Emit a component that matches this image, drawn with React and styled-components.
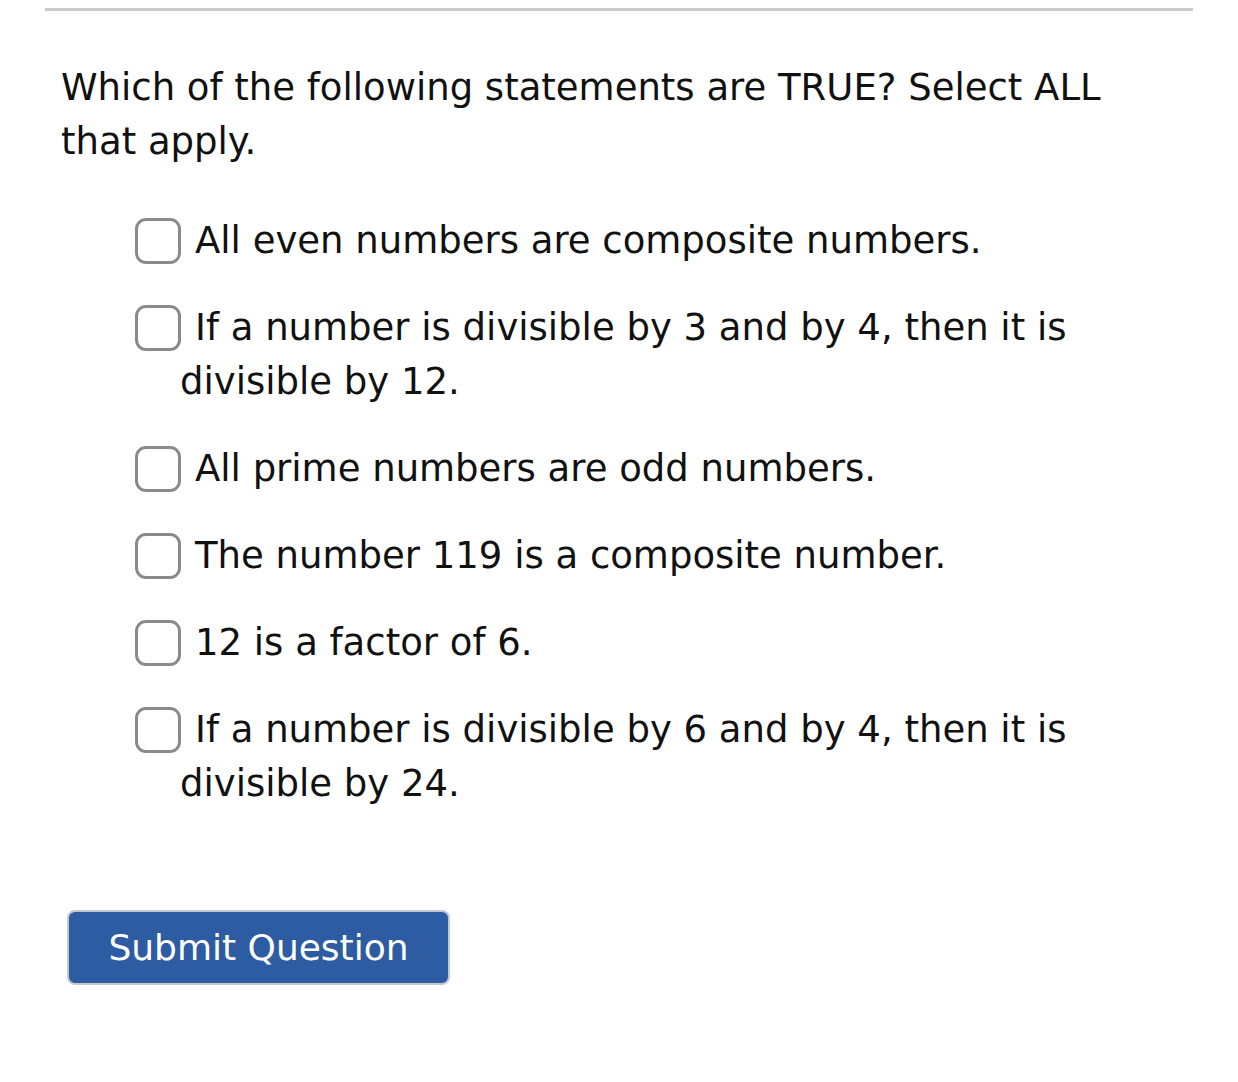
import React from "react";
import styled, { createGlobalStyle } from "styled-components";

const Global = createGlobalStyle`
  html, body { margin: 0; padding: 0; background: #ffffff; }
  body { font-family: "DejaVu Sans", "Liberation Sans", sans-serif; color: #111111; }
`;

const Page = styled.div`
  padding: 8px 45px 0 45px;
  width: 1148px;
`;

const Rule = styled.hr`
  margin: 0;
  border: 0;
  height: 3px;
  background: #cbcbcb;
`;

const Question = styled.p`
  margin: 50px 0 0 16px;
  font-size: 37px;
  line-height: 54px;
  width: 1100px;
`;

const Options = styled.div`
  margin-top: 45px;
  display: flex;
  flex-direction: column;
  gap: 33px;
`;

const Option = styled.label`
  display: block;
  padding-left: 135px;
  text-indent: -45px;
  font-size: 37px;
  line-height: 54px;
  width: 1000px;
`;

const Box = styled.span`
  display: inline-block;
  box-sizing: border-box;
  width: 46px;
  height: 46px;
  border: 3px solid #8a8a8a;
  border-radius: 11px;
  vertical-align: -11px;
  margin-right: 14px;
  text-indent: 0;
`;

const Submit = styled.button`
  margin: 99px 0 0 22px;
  width: 383px;
  height: 75px;
  box-sizing: border-box;
  background: #2d5ca2;
  border: 2px solid #c3c9d3;
  border-radius: 8px;
  color: #ffffff;
  font-family: "DejaVu Sans", "Liberation Sans", sans-serif;
  font-size: 36px;
  padding: 0;
`;

const items = [
  "All even numbers are composite numbers.",
  "If a number is divisible by 3 and by 4, then it is divisible by 12.",
  "All prime numbers are odd numbers.",
  "The number 119 is a composite number.",
  "12 is a factor of 6.",
  "If a number is divisible by 6 and by 4, then it is divisible by 24.",
];

export default function App() {
  return (
    <>
      <Global />
      <Page>
        <Rule />
        <Question>Which of the following statements are TRUE? Select ALL that apply.</Question>
        <Options>
          {items.map((t) => (
            <Option key={t}>
              <Box />
              {t}
            </Option>
          ))}
        </Options>
        <Submit>Submit Question</Submit>
      </Page>
    </>
  );
}
